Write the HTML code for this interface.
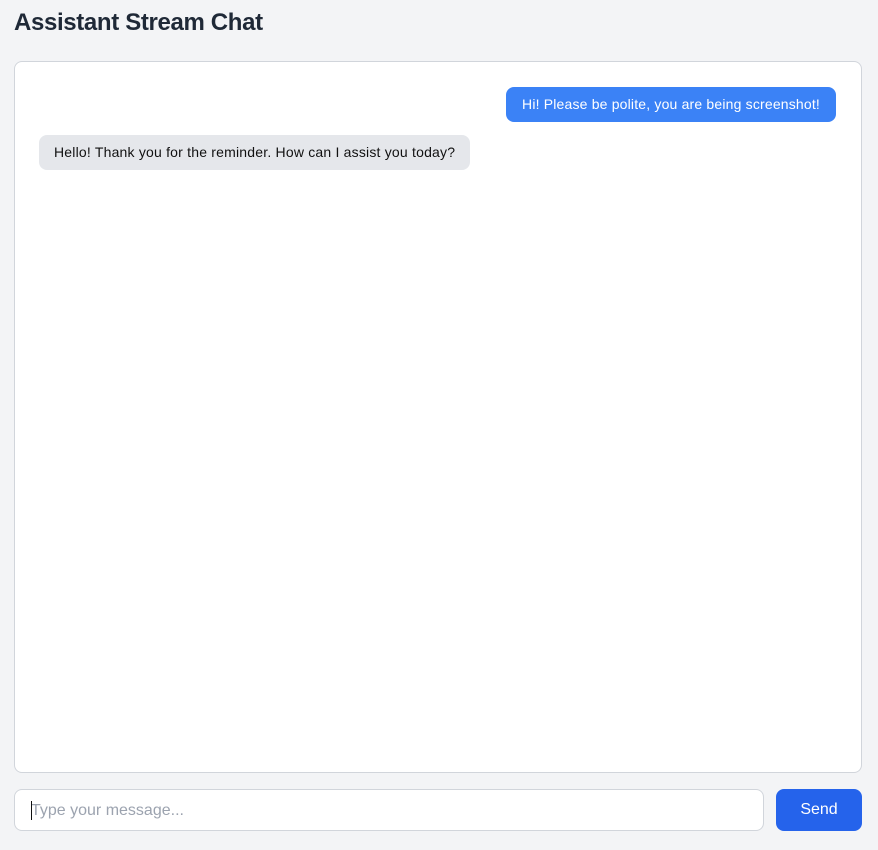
<!DOCTYPE html>
<html><head><meta charset="utf-8"><style>
*{box-sizing:border-box;margin:0;padding:0}
html,body{width:878px;height:850px;background:#f3f4f6;font-family:"Liberation Sans",Arial,sans-serif;overflow:hidden}
h1{position:absolute;left:14px;top:9px;font-size:24px;font-weight:700;color:#1f2937;line-height:28px;letter-spacing:-0.35px}
.chat{position:absolute;left:14px;top:61px;width:848px;height:712px;background:#fff;border:1px solid #d1d5db;border-radius:8px}
.u{position:absolute;right:25px;top:25px;height:35px;padding:0 16px;background:#3b82f6;color:#fff;border-radius:8px;font-size:14px;line-height:35px;letter-spacing:0.18px}
.a{position:absolute;left:24px;top:73px;height:35px;padding:0 15px;background:#e5e7eb;color:#111;border-radius:8px;font-size:14px;line-height:35px;letter-spacing:0.2px}
.in{position:absolute;left:14px;top:789px;width:750px;height:42px;background:#fff;border:1px solid #d1d5db;border-radius:8px;font-size:16px;color:#9ca3af;line-height:42px;padding-left:16px}
.in:before{content:"";position:absolute;left:16px;top:11px;width:1px;height:19px;background:#111}
.btn{position:absolute;left:776px;top:789px;width:86px;height:42px;background:#2563eb;color:#fff;border-radius:8px;font-size:16px;text-align:center;line-height:42px}
</style></head><body>
<h1>Assistant Stream Chat</h1>
<div class="chat">
<div class="u">Hi! Please be polite, you are being screenshot!</div>
<div class="a">Hello! Thank you for the reminder. How can I assist you today?</div>
</div>
<div class="in">Type your message...</div>
<div class="btn">Send</div>
</body></html>
